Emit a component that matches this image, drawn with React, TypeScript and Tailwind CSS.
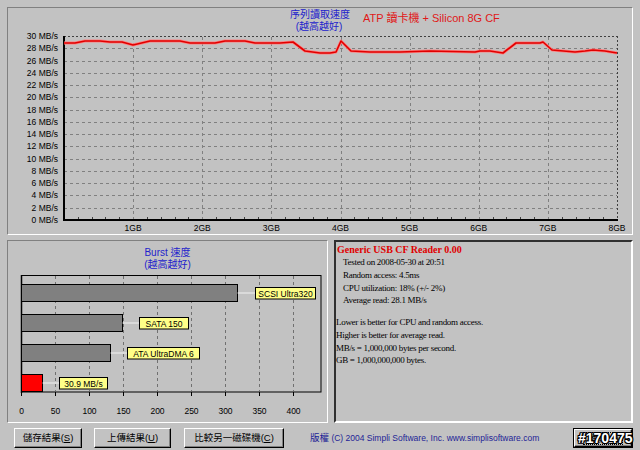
import React from "react";

const sans = "'Liberation Sans', 'Noto Sans CJK TC', sans-serif";

// 讀取曲線 (page coords)
const linePts: [number, number][] = [
  [64, 43], [75, 43], [85, 41], [100, 41], [110, 42], [122, 42], [133, 45], [150, 41],
  [180, 41], [190, 43], [215, 43], [225, 41], [245, 41], [255, 43], [280, 43], [293, 42],
  [305, 51], [320, 53], [330, 53], [336, 52], [341, 41], [351, 51], [370, 52], [400, 52],
  [430, 51], [475, 52], [480, 51], [490, 51], [503, 53], [516, 43], [540, 43], [543, 42],
  [552, 50], [575, 52], [585, 51], [593, 50], [605, 51], [617, 53],
];

const px = (n: number) => Math.round(n) + 0.5;

function SeqChart() {
  const yOf = (v: number) => 220 - (v * 184) / 30;
  const xOf = (g: number) => 64 + (g * 553) / 8;
  const yTicks = Array.from({ length: 16 }, (_, i) => i * 2);
  const minor = Array.from({ length: 40 }, (_, i) => i / 5).filter((g) => g % 1 !== 0);
  return (
    <svg width={625} height={204} viewBox="8 30 625 204" className="block" fontFamily={sans}>
      {yTicks.slice(1, 15).map((v) => (
        <line key={v} x1={64} x2={617} y1={px(yOf(v))} y2={px(yOf(v))} stroke="#808080" strokeDasharray="3 3" />
      ))}
      {[1, 2, 3, 4, 5, 6, 7].map((g) => (
        <line key={g} x1={px(xOf(g))} x2={px(xOf(g))} y1={37} y2={219} stroke="#808080" strokeDasharray="3 3" />
      ))}
      <line x1={64} x2={617} y1={36.5} y2={36.5} stroke="#404040" strokeDasharray="2 2" />
      <line x1={617.5} x2={617.5} y1={36} y2={220} stroke="#404040" strokeDasharray="2 2" />
      {minor.map((g) => (
        <line key={g} x1={px(xOf(g))} x2={px(xOf(g))} y1={217} y2={220} stroke="#404040" />
      ))}
      <line x1={64} x2={64} y1={36} y2={221} stroke="#000" strokeWidth={2} />
      <line x1={63} x2={618} y1={220} y2={220} stroke="#000" strokeWidth={2} />
      <polyline
        points={linePts.map((p) => p.join(",")).join(" ")}
        fill="none"
        stroke="#ff8080"
        strokeWidth={3}
        strokeLinejoin="round"
      />
      <polyline
        points={linePts.map((p) => p.join(",")).join(" ")}
        fill="none"
        stroke="#e00000"
        strokeWidth={1.6}
        strokeLinejoin="round"
      />
      {yTicks.map((v) => (
        <text key={v} x={58} y={yOf(v) + 3} fontSize={8.5} textAnchor="end" fill="#000">
          {v} MB/s
        </text>
      ))}
      {[1, 2, 3, 4, 5, 6, 7, 8].map((g) => (
        <text key={g} x={xOf(g)} y={231} fontSize={8.5} textAnchor="middle" fill="#000">
          {g}GB
        </text>
      ))}
    </svg>
  );
}

const bars = [
  { label: "SCSI Ultra320", y: 284, w: 216, bx: 255, bw: 60, fill: "#808080" },
  { label: "SATA 150", y: 314, w: 101, bx: 139, bw: 49, fill: "#808080" },
  { label: "ATA UltraDMA 6", y: 344, w: 89, bx: 127, bw: 72, fill: "#808080" },
  { label: "30.9 MB/s", y: 374, w: 21, bx: 59, bw: 48, fill: "#ff0000" },
];

function BurstChart() {
  const ticks = [0, 50, 100, 150, 200, 250, 300, 350, 400];
  return (
    <svg width={319} height={150} viewBox="8 272 319 150" className="block" fontFamily={sans}>
      {ticks.slice(1).map((t) => (
        <line key={t} x1={21.5 + t * 0.68} x2={21.5 + t * 0.68} y1={276} y2={391} stroke="#707070" strokeDasharray="3 3" />
      ))}
      <rect x={21.5} y={275.5} width={299.5} height={116.5} fill="none" stroke="#000" />
      <line x1={21.5} x2={21.5} y1={275} y2={393} stroke="#000" strokeWidth={1.5} />
      {ticks.map((t) => (
        <line key={t} x1={21.5 + t * 0.68} x2={21.5 + t * 0.68} y1={392} y2={396} stroke="#000" />
      ))}
      {bars.map((b) => (
        <g key={b.label}>
          <rect x={21.5} y={b.y + 0.5} width={b.w} height={17} fill={b.fill} stroke="#000" />
          <line x1={21.5 + b.w} x2={b.bx} y1={b.y + 9} y2={b.y + 9} stroke="#f2f2f2" />
          <rect x={b.bx + 0.5} y={b.y + 3.5} width={b.bw} height={11.5} fill="#ffff88" stroke="#000" />
          <text x={b.bx + 0.5 + b.bw / 2} y={b.y + 12.5} fontSize={8.5} textAnchor="middle" fill="#000">
            {b.label}
          </text>
        </g>
      ))}
      {ticks.map((t) => (
        <text key={t} x={21.5 + t * 0.68} y={414} fontSize={8.5} textAnchor="middle" fill="#000">
          {t}
        </text>
      ))}
    </svg>
  );
}

function Btn({ children, className }: { children: React.ReactNode; className: string }) {
  return (
    <div
      className={`h-[20px] flex items-center justify-center bg-[#c2c2c2] border border-t-white border-l-white border-r-black border-b-black shadow-[inset_-1px_-1px_0_#808080] text-[9.5px] text-black ${className}`}
    >
      {children}
    </div>
  );
}

const etched = "border border-t-[#808080] border-l-[#808080] border-r-white border-b-white";

export default function App() {
  return (
    <div className="w-[640px] h-[450px] bg-[#c2c2c2] pt-[7px] px-[7px] overflow-hidden relative" style={{ fontFamily: sans }}>
      {/* 序列讀取 */}
      <div className={`h-[228px] w-[626px] ${etched}`}>
        <div className="h-[22px] flex items-start pl-[282px]">
          <div className="w-[58px] pt-[1px] text-center text-[10px] leading-[12px] text-[#2222cc] whitespace-nowrap">
            <div>序列讀取速度</div>
            <div>(越高越好)</div>
          </div>
          <div className="ml-[15px] pt-[4px] text-[11px] leading-[13px] text-[#e01818] whitespace-nowrap">
            ATP 讀卡機 + Silicon 8G CF
          </div>
        </div>
        <SeqChart />
      </div>

      <div className="mt-[5px] h-[183px] flex">
        {/* Burst */}
        <div className={`w-[321px] h-full ${etched}`}>
          <div className="h-[31px] pt-[6px] text-center text-[10px] leading-[12px] text-[#2222cc]">
            <div>Burst 速度</div>
            <div>(越高越好)</div>
          </div>
          <BurstChart />
        </div>

        {/* 結果 */}
        <div
          className="ml-[6px] w-[299px] h-full border-2 border-t-[#303030] border-l-[#303030] border-r-white border-b-white pt-[1px] text-black"
          style={{ fontFamily: "'Liberation Serif', serif" }}
        >
          <div className="pl-[1px] text-[10px] leading-[13px] font-bold text-[#e00000] whitespace-nowrap">
            Generic USB CF Reader 0.00
          </div>
          <div className="pl-[7px] text-[9px] leading-[12.75px] tracking-[-0.3px] whitespace-nowrap">
            <div>Tested on 2008-05-30 at 20:51</div>
            <div>Random access: 4.5ms</div>
            <div>CPU utilization: 18% (+/- 2%)</div>
            <div>Average read: 28.1 MB/s</div>
          </div>
          <div className="mt-[9px] text-[9px] leading-[12.75px] tracking-[-0.3px] whitespace-nowrap">
            <div>Lower is better for CPU and random access.</div>
            <div>Higher is better for average read.</div>
            <div>MB/s = 1,000,000 bytes per second.</div>
            <div>GB = 1,000,000,000 bytes.</div>
          </div>
        </div>
      </div>

      {/* 按鈕 */}
      <div className="mt-[5px] h-[20px] flex items-center">
        <Btn className="ml-[7px] w-[68px]">
          儲存結果(<span className="underline">S</span>)
        </Btn>
        <Btn className="ml-[12px] w-[77px]">
          上傳結果(<span className="underline">U</span>)
        </Btn>
        <Btn className="ml-[13px] w-[100px]">
          比較另一磁碟機(<span className="underline">C</span>)
        </Btn>
        <div className="ml-[26px] text-[8.5px] text-[#1e1e96] whitespace-nowrap">
          <span className="text-[9.5px]">版權</span> (C) 2004 Simpli Software, Inc. www.simplisoftware.com
        </div>
        <div className="ml-auto w-[60px] h-[20px] border border-black">
          <Btn className="w-full h-full">
            <div className="px-[3px] border border-dotted border-black leading-[11px]">
              離開(<span className="underline">X</span>)
            </div>
          </Btn>
        </div>
      </div>

      <div className="absolute left-[578px] top-[430px] text-[14px] font-bold text-white leading-[16px] [text-shadow:1px_0_0_#000,-1px_0_0_#000,0_1px_0_#000,0_-1px_0_#000,1px_1px_0_#000,-1px_-1px_0_#000,1px_-1px_0_#000,-1px_1px_0_#000]">
        #170475
      </div>
    </div>
  );
}
